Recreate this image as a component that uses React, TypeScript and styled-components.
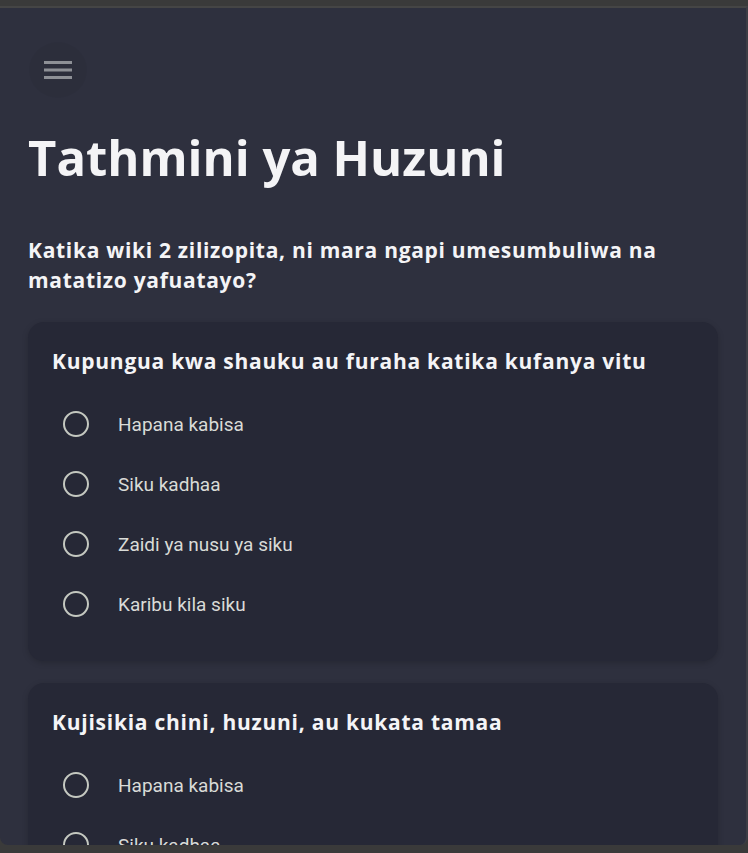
import styled, { createGlobalStyle } from 'styled-components'

const GlobalStyle = createGlobalStyle`
  html, body {
    margin: 0;
    padding: 0;
    background: #3a3a3a;
  }
  * {
    box-sizing: border-box;
  }
`

const Frame = styled.div`
  height: 853px;
  padding-top: 6px;
  background: #3a3a3a;
  overflow: hidden;
`

const Sheet = styled.div`
  height: 839px;
  background: #2e303e;
  border-top: 2px solid #454545;
  border-right: 2px solid #3c3d45;
  border-radius: 0 0 8px 8px;
  overflow: hidden;
`

const Content = styled.div`
  padding: 0 28px;
`

const Header = styled.div`
  padding: 34px 0 0 1px;
  display: flex;
  align-items: center;
`

const MenuButton = styled.button`
  width: 58px;
  height: 56px;
  border-radius: 50%;
  border: none;
  background: rgba(0, 0, 0, 0.035);
  display: flex;
  align-items: center;
  justify-content: center;
  padding: 0;
  cursor: pointer;
`

const Title = styled.h1`
  margin: 26px 0 0;
  font-family: 'Open Sans', 'Noto Sans', sans-serif;
  font-weight: 700;
  font-size: 49px;
  line-height: 66px;
  letter-spacing: 0;
  color: #f4f4f6;
`

const Lead = styled.h2`
  margin: 45px 0 0;
  font-family: 'Open Sans', 'Noto Sans', sans-serif;
  font-weight: 700;
  font-size: 21px;
  line-height: 30px;
  letter-spacing: 0.7px;
  color: #f4f4f6;
`

const Card = styled.section`
  margin-top: 27px;
  background: #262836;
  border-radius: 16px;
  padding: 24px 24px 27px;
  box-shadow: 0 2px 6px rgba(0, 0, 0, 0.18);

  & + & {
    margin-top: 22px;
  }
`

const Question = styled.h3`
  margin: 0 0 18px;
  font-family: 'Open Sans', 'Noto Sans', sans-serif;
  font-weight: 700;
  font-size: 21px;
  line-height: 30px;
  letter-spacing: 0.75px;
  color: #f4f4f6;
`

const Options = styled.div`
  display: flex;
  flex-direction: column;
`

const Option = styled.label`
  display: flex;
  align-items: center;
  height: 60px;
  padding-left: 11px;
  gap: 29px;
  cursor: pointer;
`

const Radio = styled.span`
  width: 26px;
  height: 26px;
  border-radius: 50%;
  border: 2.5px solid #c4c8c0;
  flex: none;
`

const OptionText = styled.span`
  font-family: Roboto, 'Noto Sans', sans-serif;
  font-size: 19px;
  color: #d9dbd7;
`

const MenuIcon = () => (
  <svg width="28" height="18" viewBox="0 0 28 18">
    <rect x="0" y="0" width="28" height="3" fill="#8e9096" />
    <rect x="0" y="7.5" width="28" height="3" fill="#8e9096" />
    <rect x="0" y="15" width="28" height="3" fill="#8e9096" />
  </svg>
)

const answers = ['Hapana kabisa', 'Siku kadhaa', 'Zaidi ya nusu ya siku', 'Karibu kila siku']

const questions = [
  'Kupungua kwa shauku au furaha katika kufanya vitu',
  'Kujisikia chini, huzuni, au kukata tamaa',
]

export default function App() {
  return (
    <>
      <GlobalStyle />
      <Frame>
        <Sheet>
          <Content>
            <Header>
              <MenuButton aria-label="Menu">
                <MenuIcon />
              </MenuButton>
            </Header>
            <Title>Tathmini ya Huzuni</Title>
            <Lead>
              Katika wiki 2 zilizopita, ni mara ngapi umesumbuliwa na matatizo yafuatayo?
            </Lead>
            {questions.map(q => (
              <Card key={q}>
                <Question>{q}</Question>
                <Options>
                  {answers.map(a => (
                    <Option key={a}>
                      <Radio />
                      <OptionText>{a}</OptionText>
                    </Option>
                  ))}
                </Options>
              </Card>
            ))}
          </Content>
        </Sheet>
      </Frame>
    </>
  )
}
